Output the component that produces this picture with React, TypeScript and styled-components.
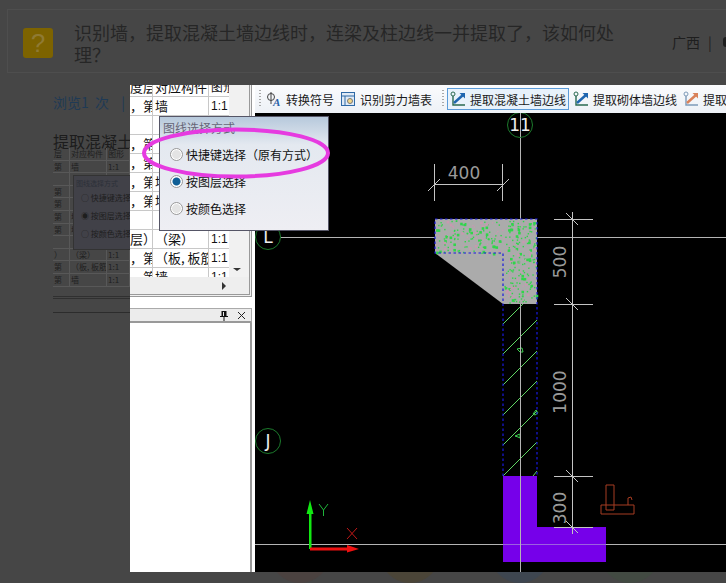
import React from "react";
import styled, { createGlobalStyle } from "styled-components";

const CJK = `"Noto Sans CJK SC", "Liberation Sans", sans-serif`;

const GlobalStyle = createGlobalStyle`
  html, body {
    margin: 0;
    padding: 0;
    background: #464646;
    font-family: ${CJK};
  }
`;

interface RowData {
  a: string;
  b: string;
  c: string;
}

const rows: RowData[] = [
  { a: "度层", b: "对应构件", c: "图形" },
  { a: "，第", b: "墙", c: "1:1" },
  { a: "", b: "", c: "" },
  { a: "，第", b: "", c: "" },
  { a: "，第", b: "", c: "" },
  { a: "，第", b: "墙", c: "" },
  { a: "，第", b: "墙", c: "" },
  { a: "", b: "", c: "" },
  { a: "层）", b: "（梁）", c: "1:1" },
  { a: "，第", b: "（板, 板筋", c: "1:1" },
  { a: "，第", b: "墙", c: "1:1" },
];

// fixed pseudo random speckles for the concrete hatch
const rand = (n: number) => {
  const v = Math.sin(n * 12.9898) * 43758.5453;
  return v - Math.floor(v);
};

const speckle = (n: number, x: number, y: number, w: number, h: number, salt: number) =>
  Array.from({ length: n }, (_, i) => ({
    x: x + rand(i + salt) * w,
    y: y + rand(i + salt + 0.37) * h,
    s: rand(i + salt + 0.71) > 0.8 ? 2.6 : 1.4,
    c: rand(i + salt + 0.93) > 0.7 ? "#c79ab0" : "#2fd64a",
  }));

const dots = [...speckle(230, 436, 220, 100, 33, 3), ...speckle(130, 504, 253, 32, 50, 900)];

const PolyIcon: React.FC<{ accent: string; line: string }> = ({ accent, line }) => (
  <ToolIcon viewBox="0 0 16 16" aria-hidden="true">
    <circle cx="3" cy="3" r="2" fill="none" stroke={line} strokeWidth="1" />
    <path d="M3 5v9h12" fill="none" stroke={line} strokeWidth="1.4" />
    <path d="M4 12 13 4" stroke={accent} strokeWidth="2.4" />
    <path d="M9.5 2H15v5.5Z" fill={accent} />
  </ToolIcon>
);

const Drawing: React.FC = () => (
  <CadSvg viewBox="255 113 471 459">
    <rect x="255" y="113" width="471" height="459" fill="#000" />
    {/* axis lines */}
    <g stroke="#b4b4b4" strokeWidth="1">
      <path d="M520.5 113V572M255 237.5H726M255 544.5H726" />
    </g>
    <circle cx="520" cy="125" r="12.5" fill="none" stroke="#1c7a2c" />
    <circle cx="268" cy="237" r="12.5" fill="#000" stroke="#1c7a2c" />
    <circle cx="268" cy="441" r="12.5" fill="none" stroke="#1c7a2c" />
    <AxisLabel x="520" y="131">11</AxisLabel>
    <AxisLabel x="268" y="243">L</AxisLabel>
    <AxisLabel x="268" y="447">J</AxisLabel>

    {/* 400 dimension */}
    <g stroke="#c4c4c4" strokeWidth="1">
      <path d="M434.5 164V201M502.5 164V201M434 184.5H502M428 191 440 179M497 191 509 179" />
    </g>
    <DimText x="464" y="179">400</DimText>

    {/* column body */}
    <path d="M435 219H537V304H503V253H435Z" fill="#ababab" />
    <path d="M435 253H503V304Z" fill="#ababab" />
    {dots.map((d, i) => (
      <rect key={i} x={d.x} y={d.y} width={d.s} height={d.s} fill={d.c} />
    ))}
    <path
      d="M503 324 523 304M503 354 537 320M503 385 537 351M503 415 537 381M503 445 537 411M503 476 537 442M533 476 537 471"
      stroke="#5fd664"
      strokeWidth="1"
    />
    <path d="M520 352l-3-3 5-1 1 4ZM533 414l3-4 2 3-3 2ZM518 437l-3-1 5-2 0 4Z" fill="none" stroke="#3fd050" />
    <path
      d="M435 219H537V476M503 476V253H435V219"
      fill="none"
      stroke="#1a1ae0"
      strokeWidth="1.2"
      strokeDasharray="2.5 2.5"
    />
    <path d="M503 476H537V527H606V562H503Z" fill="#7600ea" />
    <path d="M520.5 304V572" stroke="#b4b4b4" />
    <path d="M503 544.500H606" stroke="#b4a0d8" strokeOpacity="0.6" />

    {/* right dimensions */}
    <g stroke="#c4c4c4" strokeWidth="1">
      <path d="M572.5 212V534M554 219.5H593M554 304.5H593M554 476.5H593M554 527.5H593" />
      <path d="M566 213 578 225M566 298 578 310M566 470 578 482M566 521 578 533" />
    </g>
    <DimText transform="translate(566 262) rotate(-90)">500</DimText>
    <DimText transform="translate(566 392) rotate(-90)">1000</DimText>
    <DimText transform="translate(566 508) rotate(-90)">300</DimText>

    {/* little red detail */}
    <g fill="none" stroke="#a63c22" strokeWidth="1">
      <path d="M606 485H614V510H606ZM601 505H634V514H601ZM628 505V498L631 497 632 500" />
    </g>

    {/* ucs icon */}
    <path d="M309 549V514H306.5L310 500 313.500 514H311.500V549Z" fill="#12e812" />
    <path d="M310 547.500H347V545L359 549 347 552.500V550.500H310Z" fill="#ee1010" />
    <path d="M319 504 323.500 510 328 504M323.500 510V516" fill="none" stroke="#1fb53a" />
    <path d="M347 528 357 539M357 528 347 539" stroke="#c01818" />
  </CadSvg>
);

const MiniTable: React.FC = () => (
  <>
    {rows.map((r, i) => (
      <MiniRow key={i}>
        <MiniCell $w={17}>{i > 0 ? r.a.slice(-1) : "层"}</MiniCell>
        <MiniCell $w={37}>{r.b}</MiniCell>
        <MiniCell $w={23}>{r.c}</MiniCell>
      </MiniRow>
    ))}
  </>
);

const App: React.FC = () => (
  <Screen>
    <GlobalStyle />
    <Page>
      <Header>
        <QuestionBadge>?</QuestionBadge>
        <Title>识别墙，提取混凝土墙边线时，连梁及柱边线一并提取了，该如何处理？</Title>
        <Region>
          <span>广西</span>
          <span>|</span>
          <UserDot />
        </Region>
      </Header>
      <Meta>浏览1 次 &nbsp;|</Meta>
      <Subtitle>提取混凝土墙边线</Subtitle>
      <Thumb>
        <MiniTable />
        <MiniDialog>
          <MiniCaption>图线选择方式</MiniCaption>
          <MiniOption>○ 快捷键选择</MiniOption>
          <MiniOption>◉ 按图层选择</MiniOption>
          <MiniOption>○ 按颜色选择</MiniOption>
        </MiniDialog>
      </Thumb>
      <ThumbFoot />
      <ShareRow>
        <ShareDot $c="#4b4240" />
        <ShareDot $c="#4b4538" />
        <ShareDot $c="#3e4650" />
        <ShareDot $c="#424a42" />
      </ShareRow>
    </Page>

    <Lightbox>
      <LeftColumn>
        <TablePanel>
          <TableBody>
            <TableClip>
              {rows.map((r, i) => (
                <TableRow key={i}>
                  <FirstCell>{r.a}</FirstCell>
                  <NameCell>{r.b}</NameCell>
                  <ScaleCell>{r.c}</ScaleCell>
                </TableRow>
              ))}
            </TableClip>
            <VScroll>
              <ArrowDown />
            </VScroll>
          </TableBody>
          <HScroll>
            <ArrowRight />
          </HScroll>
        </TablePanel>
        <DockHeader>
          <svg width="10" height="11" viewBox="0 0 10 11" aria-hidden="true">
            <path d="M2.500 1H7.500V6H9V7H5.500V11H4.500V7H1V6H2.500ZM4 2V6H5V2Z" fill="#111" />
          </svg>
          <svg width="9" height="9" viewBox="0 0 9 9" aria-hidden="true">
            <path d="M1 1 8 8M8 1 1 8" stroke="#222" strokeWidth="1" />
          </svg>
        </DockHeader>
        <DockBody />
      </LeftColumn>

      <RightColumn>
        <Toolbar>
          <Grip />
          <ToolButton>
            <ToolIcon viewBox="0 0 16 16" aria-hidden="true">
              <circle cx="5" cy="6" r="3.500" fill="none" stroke="#444" />
              <path d="M5 1V13" stroke="#444" />
              <text x="7" y="15" fontSize="11" fontWeight="700" fontStyle="italic" fill="#2a62a8" fontFamily="Liberation Serif">A</text>
            </ToolIcon>
            转换符号
          </ToolButton>
          <ToolButton>
            <ToolIcon viewBox="0 0 16 16" aria-hidden="true">
              <rect x="1.500" y="1.500" width="13" height="13" fill="#dfeaf6" stroke="#2f6aa6" />
              <path d="M1.500 5H14.500M5 5V14.500" stroke="#2f6aa6" />
              <circle cx="10" cy="10" r="2.500" fill="#f3d98a" stroke="#777" />
            </ToolIcon>
            识别剪力墙表
          </ToolButton>
          <Grip $spaced />
          <ToolButton $active>
            <PolyIcon accent="#1f66b0" line="#2a6a50" />
            提取混凝土墙边线
          </ToolButton>
          <ToolButton>
            <PolyIcon accent="#1f66b0" line="#2a6a50" />
            提取砌体墙边线
          </ToolButton>
          <ToolButton>
            <PolyIcon accent="#d9825a" line="#7d9ab8" />
            提取门窗线
          </ToolButton>
        </Toolbar>
        <Drawing />
      </RightColumn>

      <Dialog>
        <DialogCaption>图线选择方式</DialogCaption>
        <RadioList>
          <RadioRow>
            <Radio />
            快捷键选择（原有方式）
          </RadioRow>
          <RadioRow>
            <Radio $checked />
            按图层选择
          </RadioRow>
          <RadioRow>
            <Radio />
            按颜色选择
          </RadioRow>
        </RadioList>
      </Dialog>

      <Annotation viewBox="0 0 200 60" aria-hidden="true">
        <ellipse cx="106" cy="27" rx="92" ry="23.500" fill="none" stroke="#e63be0" strokeWidth="4" />
      </Annotation>
    </Lightbox>
  </Screen>
);

export default App;

/* dimmed page behind the lightbox */

const Screen = styled.div`
  position: relative;
  width: 726px;
  height: 583px;
  overflow: hidden;
`;

const Page = styled.div`
  display: flex;
  flex-direction: column;
  height: 583px;
  padding: 9px 0 0 7px;
  box-sizing: border-box;
  background: #464646;
`;

const Header = styled.div`
  display: flex;
  align-items: flex-start;
  height: 64px;
  box-sizing: border-box;
  padding-left: 15px;
  border-top: 1px solid #4e4e4e;
  border-bottom: 1px solid #4e4e4e;
  border-left: 1px solid #4e4e4e;
`;

const QuestionBadge = styled.div`
  flex: 0 0 30px;
  height: 30px;
  margin-top: 18px;
  border-radius: 3px;
  background: #7d6300;
  color: #8f7a34;
  font: 400 26px/30px "Liberation Sans", sans-serif;
  text-align: center;
`;

const Title = styled.h1`
  flex: 0 0 546px;
  margin: 11px 0 0 21px;
  font-size: 18px;
  font-weight: 400;
  line-height: 22px;
  color: #262626;
`;

const Region = styled.div`
  display: flex;
  gap: 8px;
  margin: 22px 0 0 52px;
  font-size: 14px;
  line-height: 20px;
  color: #1e1e1e;
  white-space: nowrap;
`;

const UserDot = styled.span`
  flex: 0 0 8px;
  width: 8px;
  height: 10px;
  margin: 5px 0 0 3px;
  border-radius: 3px;
  background: #1e1e1e;
`;

const Meta = styled.div`
  margin: 19px 0 0 46px;
  font-size: 14px;
  line-height: 20px;
  word-spacing: 3px;
  color: #1f3a55;
`;

const Subtitle = styled.div`
  margin: 19px 0 0 46px;
  font-size: 16px;
  line-height: 20px;
  color: #1c1c1c;
  white-space: nowrap;
`;

const Thumb = styled.div`
  position: relative;
  width: 77px;
  height: 148px;
  margin: -3px 0 0 46px;
  overflow: hidden;
`;

const MiniRow = styled.div`
  display: flex;
  height: 12.6px;
  border-bottom: 1px solid #585858;
  box-sizing: border-box;
`;

const MiniCell = styled.div<{ $w: number }>`
  flex: 0 0 ${(p) => p.$w}px;
  box-sizing: border-box;
  padding-left: 1px;
  border-right: 1px solid #585858;
  font-size: 8px;
  line-height: 11px;
  color: #202020;
  white-space: nowrap;
  overflow: hidden;
`;

const MiniDialog = styled.div`
  position: absolute;
  left: 20px;
  top: 27px;
  width: 60px;
  height: 75px;
  box-sizing: border-box;
  padding: 1px 2px;
  border: 1px solid #333;
  background: #414148;
`;

const MiniCaption = styled.div`
  font-size: 7px;
  line-height: 12px;
  color: #2c3038;
`;

const MiniOption = styled.div`
  font-size: 8px;
  line-height: 18px;
  padding-left: 5px;
  color: #1e1e1e;
  white-space: nowrap;
`;

const ThumbFoot = styled.div`
  width: 77px;
  height: 17px;
  margin-left: 46px;
  box-sizing: border-box;
  border-top: 3px double #303030;
  border-bottom: 1px solid #2c2c2c;
`;

const ShareRow = styled.div`
  display: flex;
  gap: 50px;
  margin: 210px 0 0 263px;
`;

const ShareDot = styled.div<{ $c: string }>`
  width: 60px;
  height: 60px;
  border-radius: 50%;
  background: ${(p) => p.$c};
`;

/* lightbox image */

const Lightbox = styled.div`
  position: absolute;
  left: 130px;
  top: 85px;
  width: 596px;
  height: 487px;
  display: grid;
  grid-template-columns: 125px 1fr;
  grid-template-rows: 487px;
  background: #fff;
  overflow: hidden;
`;

const LeftColumn = styled.div`
  display: flex;
  flex-direction: column;
  padding-right: 3px;
  min-width: 0;
  min-height: 0;
`;

const TablePanel = styled.div`
  flex: 0 0 212px;
  display: flex;
  flex-direction: column;
  min-height: 0;
  box-sizing: border-box;
  border-right: 3px double #999;
  border-bottom: 3px double #999;
  background: #f0f0f0;
`;

const TableBody = styled.div`
  flex: 1;
  display: flex;
  min-height: 0;
`;

const TableClip = styled.div`
  flex: 0 0 99px;
  overflow: hidden;
  background: #fff;
`;

const TableRow = styled.div`
  display: flex;
  height: 19px;
  box-sizing: border-box;
  border-bottom: 1px solid #c8c8c8;

  &:first-child {
    margin-top: -7px;
  }
`;

const CellBase = styled.div`
  box-sizing: border-box;
  border-right: 1px solid #c8c8c8;
  font-size: 13px;
  line-height: 18px;
  color: #111;
  white-space: nowrap;
  overflow: hidden;
`;

const FirstCell = styled(CellBase)`
  flex: 0 0 23px;
  text-align: right;
  padding-right: 2px;
`;

const NameCell = styled(CellBase)`
  flex: 0 0 56px;
  padding-left: 2px;
`;

const ScaleCell = styled(CellBase)`
  flex: 0 0 20px;
  padding-left: 2px;
  border-right: 0;
  font-family: "Liberation Sans", sans-serif;
  font-size: 12px;
`;

const VScroll = styled.div`
  flex: 1;
  position: relative;
  background: #f1f1f1;
`;

const ArrowDown = styled.span`
  position: absolute;
  left: 4px;
  bottom: 6px;
  border-left: 4px solid transparent;
  border-right: 4px solid transparent;
  border-top: 3px solid #333;
`;

const HScroll = styled.div`
  flex: 0 0 17px;
  display: flex;
  align-items: center;
  justify-content: flex-end;
  padding-right: 23px;
  background: #eeeeee;
`;

const ArrowRight = styled.span`
  border-top: 4px solid transparent;
  border-bottom: 4px solid transparent;
  border-left: 4px solid #333;
`;

const DockHeader = styled.div`
  flex: 0 0 15px;
  display: flex;
  align-items: center;
  justify-content: flex-end;
  gap: 8px;
  margin-top: 11px;
  padding-right: 5px;
  box-sizing: border-box;
  border-top: 1px solid #aaa;
  border-right: 1px solid #aaa;
  border-bottom: 2px solid #999;
  background: #ececec;
`;

const DockBody = styled.div`
  flex: 1;
  border-right: 2px solid #999;
  background: #fff;
`;

const RightColumn = styled.div`
  display: flex;
  flex-direction: column;
  min-width: 0;
  min-height: 0;
`;

const Toolbar = styled.div`
  flex: 0 0 28px;
  display: flex;
  align-items: center;
  gap: 2px;
  padding-left: 3px;
  box-sizing: border-box;
  background: linear-gradient(#fafbfd, #edf1f6);
  white-space: nowrap;
  overflow: hidden;
`;

const Grip = styled.span<{ $spaced?: boolean }>`
  flex: 0 0 3px;
  height: 18px;
  margin-left: ${(p) => (p.$spaced ? 6 : 1)}px;
  background-image: linear-gradient(#a8a8a8 50%, transparent 50%);
  background-size: 2px 3px;
  background-repeat: repeat-y;
`;

const ToolButton = styled.div<{ $active?: boolean }>`
  flex: 0 0 auto;
  display: flex;
  align-items: center;
  gap: 4px;
  height: 22px;
  padding: 0 ${(p) => (p.$active ? 2 : 1)}px;
  box-sizing: border-box;
  border: 1px solid ${(p) => (p.$active ? "#5b9bd8" : "transparent")};
  background: ${(p) => (p.$active ? "#e8f2fb" : "transparent")};
  font-size: 12px;
  color: #1a1a1a;
`;

const ToolIcon = styled.svg`
  flex: 0 0 16px;
  width: 16px;
  height: 16px;
`;

const CadSvg = styled.svg`
  flex: 1;
  display: block;
  width: 471px;
  height: 459px;
`;

const AxisLabel = styled.text`
  fill: #eee;
  font-family: "DejaVu Sans", sans-serif;
  font-size: 17px;
  text-anchor: middle;
`;

const DimText = styled.text`
  fill: #9a9a9a;
  font-family: "DejaVu Sans", sans-serif;
  font-size: 17px;
  text-anchor: middle;
`;

const Dialog = styled.div`
  position: absolute;
  left: 29px;
  top: 31px;
  width: 170px;
  height: 115px;
  box-sizing: border-box;
  border: 1px solid #556;
  background: linear-gradient(#b7c9dc 0, #e4e9f0 28px, #eeeef3 100%);
`;

const DialogCaption = styled.div`
  padding: 3px 0 0 3px;
  font-size: 12px;
  line-height: 16px;
  color: #667;
`;

const RadioList = styled.div`
  display: flex;
  flex-direction: column;
  gap: 9px;
  margin-top: 9px;
  padding-left: 10px;
`;

const RadioRow = styled.div`
  display: flex;
  align-items: center;
  gap: 3px;
  height: 18px;
  font-size: 12px;
  color: #111;
  white-space: nowrap;
`;

const Radio = styled.span<{ $checked?: boolean }>`
  flex: 0 0 11px;
  width: 11px;
  height: 11px;
  border-radius: 50%;
  border: 1px solid #999;
  background: ${(p) =>
    p.$checked
      ? "radial-gradient(circle, #0f5f96 0 3.5px, #fff 4.5px)"
      : "radial-gradient(circle, #e4e4e4 0 4px, #fff 5px)"};
`;

const Annotation = styled.svg`
  position: absolute;
  left: 0;
  top: 41px;
  width: 200px;
  height: 60px;
  pointer-events: none;
`;
